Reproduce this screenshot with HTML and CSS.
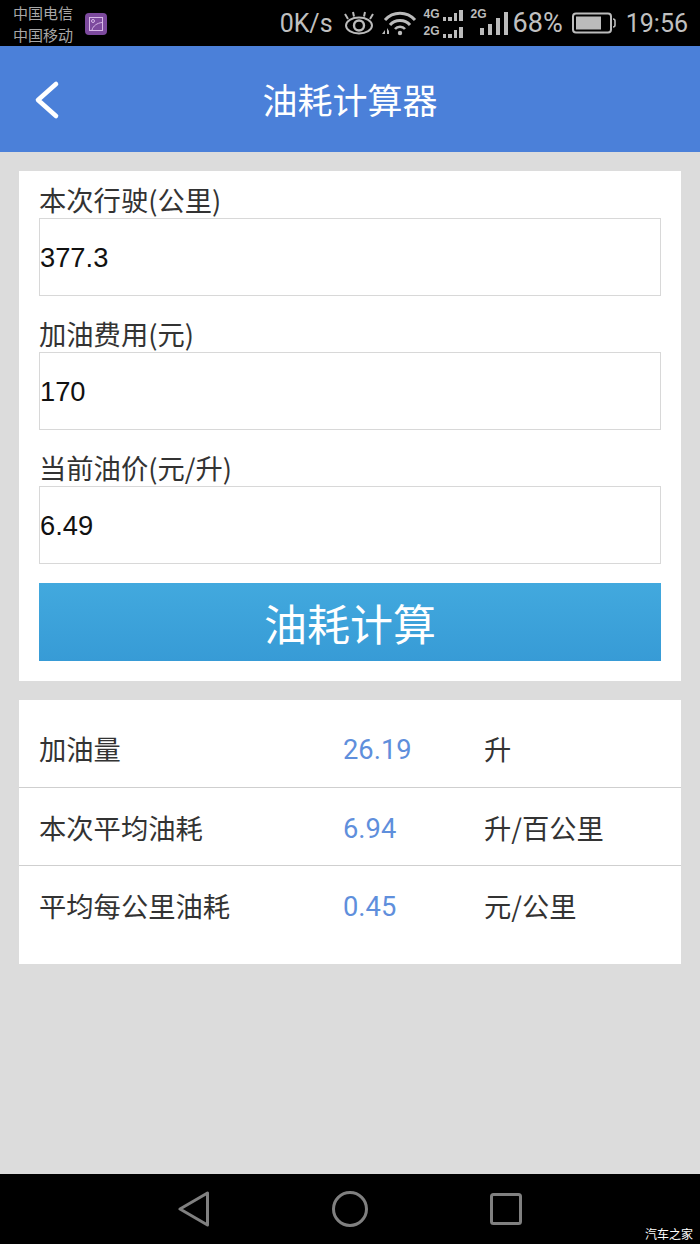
FILE: index.html
```html
<!DOCTYPE html>
<html lang="zh-CN">
<head>
    <meta charset="UTF-8">
    <meta name="viewport" content="width=device-width, initial-scale=1.0">
    <title>油耗计算器</title>
    <link rel="stylesheet" href="styles.css">
</head>
<body>
    <div class="phone">
        <div class="status-bar">
            <div class="carriers">
                <span>中国电信</span>
                <span>中国移动</span>
            </div>
            <svg class="gallery-icon" width="22" height="22" viewBox="0 0 22 22">
                <rect width="22" height="22" rx="4" fill="#7d4a9e"/>
                <rect x="4.5" y="4.5" width="13" height="13" fill="none" stroke="#d8b8e8" stroke-width="1"/>
                <circle cx="8" cy="8" r="1.5" fill="none" stroke="#d8b8e8"/>
                <path d="M7 17 C8 13 12 10 17 9.5" fill="none" stroke="#d8b8e8"/>
            </svg>
            <div class="status-right">
                <span class="speed">0K/s</span>
                <svg class="eye" width="32" height="24" viewBox="0 0 32 24">
                    <ellipse cx="16" cy="14.5" rx="13" ry="8" fill="none" stroke="#bbb" stroke-width="2"/>
                    <circle cx="16" cy="14.5" r="5" fill="none" stroke="#bbb" stroke-width="2.4"/>
                    <path d="M5 8 L2 3 M11 5.5 L10 1 M21 5.5 L22 1 M27 8 L30 3" stroke="#bbb" stroke-width="2"/>
                </svg>
                <svg class="wifi" width="36" height="26" viewBox="0 0 36 26">
                    <path d="M4 10 C12 1 26 1 34 10" fill="none" stroke="#bbb" stroke-width="3"/>
                    <path d="M9 15 C14 9 24 9 29 15" fill="none" stroke="#bbb" stroke-width="3"/>
                    <path d="M14 19 C16.5 16 21.5 16 24 19" fill="none" stroke="#bbb" stroke-width="2.6"/>
                    <circle cx="19" cy="23" r="2.2" fill="#bbb"/>
                    <path d="M1 24 L4 20 L4 24 Z M6 18 L6 24 L8 24 L8 21 Z" fill="#bbb"/>
                </svg>
                <div class="dual-signal">
                    <div class="signal-row">
                        <span class="net">4G</span>
                        <div class="bars small">
                            <i class="b1"></i><i class="b2"></i><i class="b3"></i><i class="b4"></i>
                        </div>
                    </div>
                    <div class="signal-row">
                        <span class="net">2G</span>
                        <div class="bars small">
                            <i class="b1"></i><i class="b2"></i><i class="b3"></i><i class="b4"></i>
                        </div>
                    </div>
                </div>
                <div class="single-signal">
                    <span class="net">2G</span>
                    <div class="bars large">
                        <i class="b1"></i><i class="b2"></i><i class="b3"></i><i class="b4"></i>
                    </div>
                </div>
                <span class="percent">68%</span>
                <svg class="battery" width="44" height="22" viewBox="0 0 44 22">
                    <rect x="1" y="1.5" width="38" height="19" rx="3" fill="none" stroke="#bbb" stroke-width="2"/>
                    <rect x="4" y="4.5" width="25" height="13" fill="#bbb"/>
                    <path d="M41 7 C43 7 43 8 43 9 L43 13 C43 14 43 15 41 15" fill="none" stroke="#bbb" stroke-width="1.6"/>
                </svg>
                <span class="clock">19:56</span>
            </div>
        </div>

        <header class="app-header">
            <svg class="back" width="28" height="42" viewBox="0 0 28 42">
                <path d="M23 5 L5 21 L23 37" fill="none" stroke="#fff" stroke-width="4.6" stroke-linecap="round" stroke-linejoin="round"/>
            </svg>
            <h1>油耗计算器</h1>
        </header>

        <main class="content">
            <section class="card form-card">
                <div class="field">
                    <label>本次行驶(公里)</label>
                    <input type="text" value="377.3">
                </div>
                <div class="field">
                    <label>加油费用(元)</label>
                    <input type="text" value="170">
                </div>
                <div class="field">
                    <label>当前油价(元/升)</label>
                    <input type="text" value="6.49">
                </div>
                <button class="calc-btn">油耗计算</button>
            </section>

            <section class="card result-card">
                <div class="result-row">
                    <span class="result-name">加油量</span>
                    <span class="result-value">26.19</span>
                    <span class="result-unit">升</span>
                </div>
                <div class="result-row">
                    <span class="result-name">本次平均油耗</span>
                    <span class="result-value">6.94</span>
                    <span class="result-unit">升/百公里</span>
                </div>
                <div class="result-row last">
                    <span class="result-name">平均每公里油耗</span>
                    <span class="result-value">0.45</span>
                    <span class="result-unit">元/公里</span>
                </div>
            </section>
        </main>

        <nav class="nav-bar">
            <svg width="32" height="36" viewBox="0 0 32 36">
                <path d="M29.5 2 L29.5 34 L2 18 Z" fill="none" stroke="#808080" stroke-width="3" stroke-linejoin="round"/>
            </svg>
            <svg width="36" height="36" viewBox="0 0 36 36">
                <circle cx="18" cy="18" r="16.5" fill="none" stroke="#808080" stroke-width="3"/>
            </svg>
            <svg width="32" height="32" viewBox="0 0 32 32">
                <rect x="1.5" y="1.5" width="29" height="29" rx="2" fill="none" stroke="#808080" stroke-width="3"/>
            </svg>
            <span class="watermark">汽车之家</span>
        </nav>
    </div>
</body>
</html>
```

FILE: styles.css
```css
* {
    box-sizing: border-box;
}

body {
    margin: 0;
    font-family: "Noto Sans CJK SC", "Noto Sans", sans-serif;
    background: #dcdcdc;
}

.phone {
    width: 700px;
    height: 1244px;
    display: flex;
    flex-direction: column;
    overflow: hidden;
}

/* status bar */
.status-bar {
    height: 46px;
    background: #000;
    color: #bbb;
    display: flex;
    align-items: center;
    padding: 0 12px 0 13px;
}

.carriers {
    display: flex;
    flex-direction: column;
    margin-top: 2px;
    font-size: 15px;
    line-height: 22px;
    color: #a8a8a8;
}

.gallery-icon {
    margin-left: 12px;
    margin-top: 1px;
}

.status-right {
    margin-left: auto;
    display: flex;
    align-items: center;
}

.speed,
.clock {
    font-family: Roboto, sans-serif;
    font-size: 25px;
    color: #c0c0c0;
}

.percent {
    font-family: Roboto, sans-serif;
    font-size: 27px;
    color: #c0c0c0;
    margin-left: 5px;
}

.eye {
    margin-left: 10px;
}

.wifi {
    margin-left: 6px;
}

.dual-signal {
    margin-left: 7px;
    display: flex;
    flex-direction: column;
    gap: 4px;
}

.signal-row {
    display: flex;
    align-items: flex-end;
    height: 13px;
}

.net {
    font-family: "Liberation Sans", sans-serif;
    font-size: 12px;
    font-weight: bold;
    line-height: 12px;
    color: #bbb;
    align-self: flex-start;
}

.bars {
    display: flex;
    align-items: flex-end;
}

.bars i {
    display: block;
    background: #bbb;
}

.bars.small {
    gap: 2px;
    margin-left: 3px;
}

.bars.small i {
    width: 3.5px;
}

.bars.small .b1 { height: 4px; }
.bars.small .b2 { height: 4px; }
.bars.small .b3 { height: 8px; }
.bars.small .b4 { height: 11px; }

.single-signal {
    margin-left: 8px;
    width: 37px;
    height: 24px;
    position: relative;
    display: flex;
    justify-content: flex-end;
    align-items: flex-end;
}

.single-signal .net {
    position: absolute;
    top: -3px;
    left: 0;
}

.bars.large {
    gap: 4px;
}

.bars.large i {
    width: 4px;
}

.bars.large .b1 { height: 7px; }
.bars.large .b2 { height: 11px; }
.bars.large .b3 { height: 17px; }
.bars.large .b4 { height: 23px; }

.battery {
    margin-left: 9px;
}

.clock {
    margin-left: 10px;
}

/* header */
.app-header {
    height: 106px;
    padding-bottom: 2px;
    background: #4b80d9;
    display: flex;
    align-items: center;
    justify-content: center;
    position: relative;
}

.app-header h1 {
    margin: 0;
    font-size: 35px;
    font-weight: 400;
    color: #fff;
}

.back {
    position: absolute;
    left: 33px;
    top: 33px;
}

/* main */
.content {
    flex: 1;
    padding: 19px 19px 0;
    display: flex;
    flex-direction: column;
    gap: 19px;
}

.card {
    background: #fff;
}

.form-card {
    height: 510px;
    padding: 15px 20px 0;
}

.field {
    height: 134px;
    display: flex;
    flex-direction: column;
}

.field label {
    font-size: 27.3px;
    line-height: 26px;
    margin-bottom: 6px;
    color: #333;
}

.field input {
    width: 100%;
    height: 78px;
    border: 1px solid #d8d8d8;
    padding: 1px 0 0;
    font-family: "Liberation Sans", sans-serif;
    font-size: 27.3px;
    color: #111;
    background: #fff;
    outline: none;
}

.calc-btn {
    display: block;
    width: 100%;
    height: 78px;
    margin-top: -5px;
    border: none;
    background: linear-gradient(to bottom, #42a9de, #379bd6);
    color: #fff;
    font-family: inherit;
    font-size: 43px;
}

.result-card {
    height: 264px;
}

.result-row {
    height: 78px;
    border-bottom: 1px solid #cfcfcf;
    display: flex;
    align-items: center;
    font-size: 27.3px;
    padding-left: 20px;
    color: #333;
}

.result-row:first-child {
    height: 88px;
    padding-top: 8px;
}

.result-row.last {
    height: 98px;
    border-bottom: none;
    padding-bottom: 21px;
}

.result-name {
    width: 304px;
}

.result-value {
    width: 141px;
    padding-top: 4px;
    font-family: Roboto, sans-serif;
    color: #5f8fdc;
}

/* nav bar */
.nav-bar {
    height: 70px;
    background: #000;
    display: flex;
    align-items: center;
    justify-content: center;
    gap: 122px;
    position: relative;
}

.watermark {
    position: absolute;
    right: 7px;
    bottom: 3px;
    font-size: 12px;
    line-height: 15px;
    color: #fff;
}
```
